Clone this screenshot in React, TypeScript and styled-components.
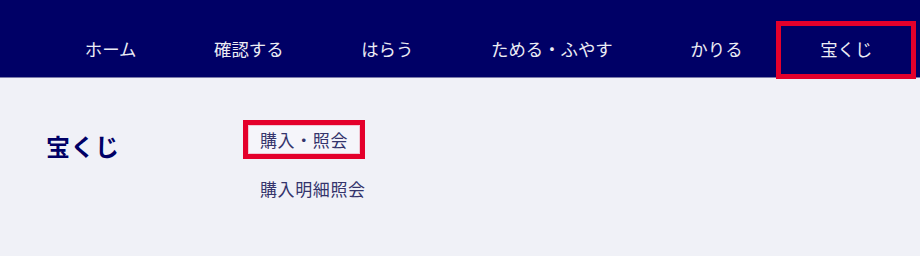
import React from 'react'
import styled, { createGlobalStyle } from 'styled-components'

const Global = createGlobalStyle`
  html, body { margin: 0; padding: 0; background: #f0f1f7; }
  body { font-family: "Noto Sans CJK JP", "Noto Sans", sans-serif; }
`

interface MarkProps {
  marked?: boolean;
}

const navItems = ['ホーム', '確認する', 'はらう', 'ためる・ふやす', 'かりる', '宝くじ']
const subLinks = ['購入・照会', '購入明細照会']

export default function App() {
  return (
    <Page>
      <Global />
      <Header>
        <Nav>
          {navItems.map((label, i) => (
            <NavItem key={label} marked={i === navItems.length - 1}>{label}</NavItem>
          ))}
        </Nav>
      </Header>
      <Content>
        <Heading>宝くじ</Heading>
        <LinkList>
          {subLinks.map((label, i) => (
            <SubLink key={label} marked={i === 0}>{label}</SubLink>
          ))}
        </LinkList>
      </Content>
    </Page>
  )
}

const Page = styled.div`
  width: 920px; height: 256px; background: #f0f1f7; overflow: hidden;
`
const Header = styled.header`
  height: 77px; background: #000066; border-bottom: 1px solid #7b7ba9;
  padding-left: 46px; box-sizing: content-box;
`
const Nav = styled.nav`
  display: flex; align-items: flex-start; height: 100%;
`
const NavItem = styled.div<MarkProps>`
  margin-top: 26px; height: 48px; padding: 0 38.8px 4px;
  box-sizing: border-box;
  display: flex; align-items: center;
  font-size: 17.4px; color: #ececf4; white-space: nowrap;
  outline: ${p => p.marked ? '5px solid #e4002b' : 'none'};
  position: relative; z-index: 1;
`
const Content = styled.main`
  display: flex; padding: 47px 0 0 46px;
`
const Heading = styled.h2`
  margin: 6px 0 0; width: 202px;
  font-size: 24px; line-height: 29px; font-weight: 700; color: #000066;
  letter-spacing: 0.5px;
`
const LinkList = styled.div`
  display: flex; flex-direction: column; align-items: flex-start; gap: 20px;
`
const SubLink = styled.a<MarkProps>`
  display: block; height: 29px; line-height: 29px; padding: 0 12px;
  font-size: 17px; letter-spacing: 0.6px; color: #34346c; text-decoration: none;
  background: ${p => p.marked ? '#f5f5fa' : 'transparent'};
  outline: ${p => p.marked ? '5px solid #e4002b' : 'none'};
  box-shadow: ${p => p.marked ? 'inset 0 0 0 1px #f0c8d4' : 'none'};
`
